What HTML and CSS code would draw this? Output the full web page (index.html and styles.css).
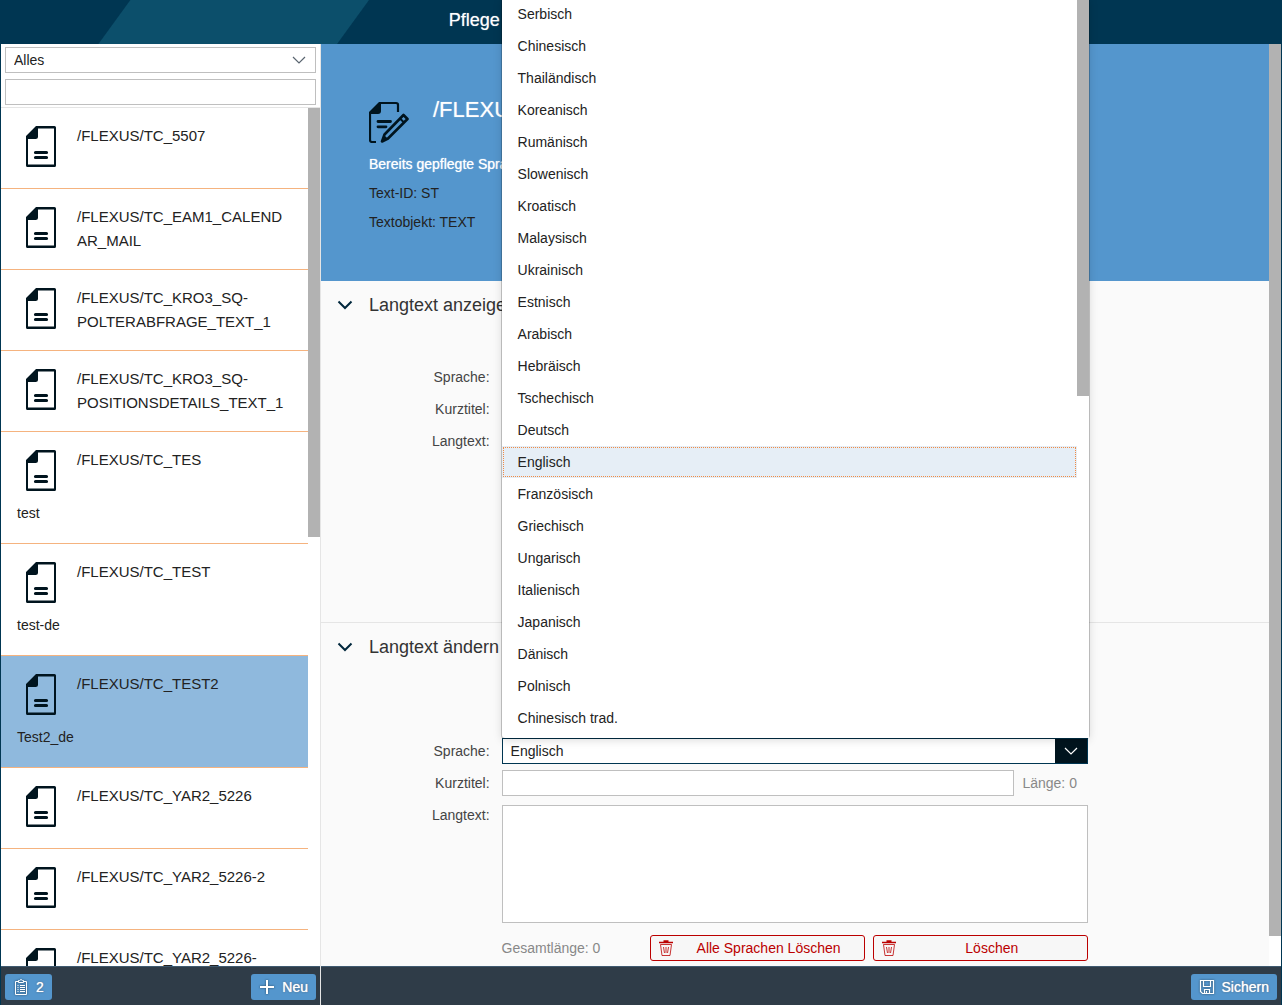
FILE: index.html
```html
<!DOCTYPE html>
<html lang="de">
<head>
<meta charset="utf-8">
<meta name="viewport" content="width=device-width, initial-scale=1">
<title>Pflege</title>
<link rel="stylesheet" href="styles.css">
</head>
<body>
<svg class="sprite" aria-hidden="true">
  <symbol id="doc" viewBox="0 0 32 42">
    <path fill-rule="evenodd" d="M11 1H29.500Q31 1 31 2.500V40.500Q31 42 29.500 42H2.500Q1 42 1 40.500V11ZM13 3.500V11.500Q13 14 10.500 14H3V39.500H29V3.500Z"/>
    <path d="M10.500 27.500H21.500M10.500 32.500H21.500" fill="none" stroke="currentColor" stroke-width="3.200" stroke-linecap="round"/>
  </symbol>
  <symbol id="edit" viewBox="1 0 42 42">
    <path d="M1 11 11 1H13V10Q13 13 10 13H1Z"/>
    <path d="M11 2H28Q30 2 30 3.500V11M2 11V39Q2 41 4 41H8" fill="none" stroke="currentColor" stroke-width="2.200"/>
    <path d="M10 20.500H22.500M10 25.800H18" fill="none" stroke="currentColor" stroke-width="2.800" stroke-linecap="round"/>
    <path d="M35.500 14 39.500 18 20 37.500 14 40.500 16.500 33.500Z" fill="none" stroke="currentColor" stroke-width="2.600" stroke-linejoin="round"/>
    <path d="M32 17.500 36 21.500" stroke="currentColor" stroke-width="2"/>
    <path d="M16 34 20 38 13 41Z"/>
  </symbol>
  <symbol id="chevron" viewBox="0 0 16 16">
    <path d="M2 5 8 11 14 5" fill="none" stroke="currentColor" stroke-width="1.200"/>
  </symbol>
  <symbol id="chevron-bold" viewBox="0 0 16 16">
    <path d="M1.500 4.500 8 11 14.500 4.500" fill="none" stroke="currentColor" stroke-width="2"/>
  </symbol>
  <symbol id="trash" viewBox="0 0 16 16">
    <path d="M1 2.500H15M5.500 1H10.500" fill="none" stroke="currentColor" stroke-width="1.400"/>
    <path d="M2.500 4.500 4 15.500H12L13.500 4.500ZM5.500 7 6.500 13M8 7V13M10.500 7 9.500 13" fill="none" stroke="currentColor" stroke-width=".8"/>
  </symbol>
  <symbol id="clipboard" viewBox="0 0 16 16">
    <path d="M5 2.500H2.500V15.500H13.500V2.500H11M5.500 1.500H6.500L8 .500 9.500 1.500H10.500V3.500H5.500ZM7 6.500H12M7 8.500H12M7 10.500H12M7 12.500H12M4.500 6.500H5.500M4.500 8.500H5.500M4.500 10.500H5.500M4.500 12.500H5.500" fill="none" stroke="currentColor"/>
  </symbol>
  <symbol id="plus" viewBox="0 0 16 16">
    <path d="M8 1V15M1 8H15" fill="none" stroke="currentColor" stroke-width="2"/>
  </symbol>
  <symbol id="save" viewBox="0 0 16 16">
    <path d="M1.500 1.500H14.500V14.500H3.500L1.500 12.500ZM4.500 1.500V7.500H11.500V1.500M5.500 14.500V10.500H10.500V14.500M7.500 12V14.500" fill="none" stroke="currentColor" stroke-width="1.200"/>
  </symbol>
</svg>

<header class="shell-bar"><h1 class="shell-title">Pflege</h1></header>

<div class="app">
  <aside class="master">
    <div class="filters">
      <div class="select">
        <select class="select-input" aria-label="Filter"><option>Alles</option></select>
        <svg class="icon select-arrow"><use href="#chevron"/></svg>
      </div>
      <input class="field" type="search" aria-label="Suche">
    </div>
    <div class="list-area">
      <ul class="list">
        <li class="item"><svg class="doc"><use href="#doc"/></svg><span class="item-title">/FLEXUS/TC_5507</span></li>
        <li class="item"><svg class="doc"><use href="#doc"/></svg><span class="item-title">/FLEXUS/TC_EAM1_CALENDAR_MAIL</span></li>
        <li class="item"><svg class="doc"><use href="#doc"/></svg><span class="item-title">/FLEXUS/TC_KRO3_SQ-POLTERABFRAGE_TEXT_1</span></li>
        <li class="item"><svg class="doc"><use href="#doc"/></svg><span class="item-title">/FLEXUS/TC_KRO3_SQ-POSITIONSDETAILS_TEXT_1</span></li>
        <li class="item"><svg class="doc"><use href="#doc"/></svg><span class="item-title">/FLEXUS/TC_TES</span><span class="item-text">test</span></li>
        <li class="item"><svg class="doc"><use href="#doc"/></svg><span class="item-title">/FLEXUS/TC_TEST</span><span class="item-text">test-de</span></li>
        <li class="item item-selected"><svg class="doc"><use href="#doc"/></svg><span class="item-title">/FLEXUS/TC_TEST2</span><span class="item-text">Test2_de</span></li>
        <li class="item"><svg class="doc"><use href="#doc"/></svg><span class="item-title">/FLEXUS/TC_YAR2_5226</span></li>
        <li class="item"><svg class="doc"><use href="#doc"/></svg><span class="item-title">/FLEXUS/TC_YAR2_5226-2</span></li>
        <li class="item"><svg class="doc"><use href="#doc"/></svg><span class="item-title">/FLEXUS/TC_YAR2_5226-</span></li>
      </ul>
      <div class="scroll"><div class="thumb thumb-list"></div></div>
    </div>
    <footer class="bar">
      <button class="button" type="button"><svg class="icon"><use href="#clipboard"/></svg>2</button>
      <button class="button" type="button"><svg class="icon"><use href="#plus"/></svg>Neu</button>
    </footer>
  </aside>

  <main class="detail">
    <div class="detail-area">
      <div class="page">
        <section class="object">
          <div class="object-head">
            <svg class="object-icon"><use href="#edit"/></svg>
            <h2 class="object-title">/FLEXU</h2>
          </div>
          <p class="object-line object-strong">Bereits gepflegte Spra</p>
          <p class="object-line">Text-ID: ST</p>
          <p class="object-line">Textobjekt: TEXT</p>
        </section>

        <section class="panel panel-view">
          <h3 class="panel-title"><svg class="icon panel-chevron"><use href="#chevron-bold"/></svg>Langtext anzeige</h3>
          <div class="form">
            <span class="label">Sprache:</span>
            <span class="label">Kurztitel:</span>
            <span class="label">Langtext:</span>
          </div>
        </section>

        <section class="panel panel-edit">
          <h3 class="panel-title"><svg class="icon panel-chevron"><use href="#chevron-bold"/></svg>Langtext ändern</h3>
          <form class="form">
            <label class="label" for="language">Sprache:</label>
            <div class="cell">
              <div class="select select-open">
                <select class="select-input" id="language"><option>Englisch</option></select>
                <span class="select-button"><svg class="icon"><use href="#chevron"/></svg></span>
              </div>
              <div class="popover">
                <ul class="options" role="listbox" aria-label="Sprache">
                  <li class="option" role="option">Serbisch</li>
                  <li class="option" role="option">Chinesisch</li>
                  <li class="option" role="option">Thailändisch</li>
                  <li class="option" role="option">Koreanisch</li>
                  <li class="option" role="option">Rumänisch</li>
                  <li class="option" role="option">Slowenisch</li>
                  <li class="option" role="option">Kroatisch</li>
                  <li class="option" role="option">Malaysisch</li>
                  <li class="option" role="option">Ukrainisch</li>
                  <li class="option" role="option">Estnisch</li>
                  <li class="option" role="option">Arabisch</li>
                  <li class="option" role="option">Hebräisch</li>
                  <li class="option" role="option">Tschechisch</li>
                  <li class="option" role="option">Deutsch</li>
                  <li class="option option-selected" role="option" aria-selected="true">Englisch</li>
                  <li class="option" role="option">Französisch</li>
                  <li class="option" role="option">Griechisch</li>
                  <li class="option" role="option">Ungarisch</li>
                  <li class="option" role="option">Italienisch</li>
                  <li class="option" role="option">Japanisch</li>
                  <li class="option" role="option">Dänisch</li>
                  <li class="option" role="option">Polnisch</li>
                  <li class="option" role="option">Chinesisch trad.</li>
                </ul>
                <div class="scroll"><div class="thumb thumb-options"></div></div>
              </div>
            </div>
            <label class="label" for="short">Kurztitel:</label>
            <div class="cell cell-row">
              <input class="field" id="short" type="text">
              <span class="hint hint-side">Länge: 0</span>
            </div>
            <label class="label" for="long">Langtext:</label>
            <textarea class="field area" id="long"></textarea>
            <div class="actions">
              <span class="hint">Gesamtlänge: 0</span>
              <button class="danger" type="button"><svg class="icon"><use href="#trash"/></svg><span class="danger-text">Alle Sprachen Löschen</span></button>
              <button class="danger" type="button"><svg class="icon"><use href="#trash"/></svg><span class="danger-text">Löschen</span></button>
            </div>
          </form>
        </section>
      </div>
      <div class="scroll"><div class="thumb thumb-page"></div></div>
    </div>
    <footer class="bar bar-end">
      <button class="button" type="button"><svg class="icon"><use href="#save"/></svg>Sichern</button>
    </footer>
  </main>
</div>
</body>
</html>
```

FILE: styles.css
```css
* { box-sizing: border-box; }

body {
  margin: 0;
  height: 100vh;
  display: flex;
  flex-direction: column;
  overflow: hidden;
  background: #003652;
  color: #333;
  font: 14px/16px "Liberation Sans", Arial, sans-serif;
}

h1, h2, h3, p, ul { margin: 0; padding: 0; font-weight: normal; }
ul { list-style: none; }
button, input, select, textarea { font: inherit; color: inherit; margin: 0; }
svg { flex: none; fill: currentColor; }

.sprite { display: none; }
.icon { width: 16px; height: 16px; }

/* Shell bar with the slanted band */
.shell-bar {
  flex: none;
  height: 44px;
  display: flex;
  align-items: center;
  padding-left: 35%;
  padding-bottom: 4px;
  background: linear-gradient(126deg, transparent 105px, #0c4f6b 106px, #0c4f6b 298px, transparent 299px) no-repeat 0 0 / 400px 44px;
}
.shell-title { font-size: 18px; line-height: 24px; color: #fff; text-shadow: 0 0 1px rgba(255, 255, 255, .6); }

.app { flex: 1; min-height: 0; display: flex; padding: 0 1px; }

/* Master list */
.master {
  width: 320px;
  flex: none;
  display: flex;
  flex-direction: column;
  background: #fff;
  border-right: 1px solid #e5e5e5;
}
.filters {
  display: flex;
  flex-direction: column;
  gap: 6px;
  padding: 3px 4px 2px;
  border-bottom: 1px solid #e5e5e5;
}
.field {
  width: 100%;
  height: 26px;
  padding: 0 8px;
  border: 1px solid #bfbfbf;
  border-radius: 0;
  background: #fff;
  appearance: none;
  outline: none;
}
.select {
  display: flex;
  align-items: center;
  height: 26px;
  border: 1px solid #bfbfbf;
  background: #fff;
}
.select-input {
  flex: 1;
  min-width: 0;
  height: 24px;
  padding: 0 8px;
  border: 0;
  background: none;
  color: #222;
  appearance: none;
  outline: none;
}
.select-arrow { margin-right: 8px; color: #5a6570; }

.list-area { flex: 1; min-height: 0; display: flex; overflow: hidden; }
.list { flex: 1; min-width: 0; }
.item {
  display: grid;
  grid-template-columns: 60px 1fr;
  padding: 16px;
  border-bottom: 1px solid #f5b37f;
}
.item-selected { background: #8fb9dd; }
.doc { width: 32px; height: 42px; margin: 1px 8px 5px; color: #00141e; }
.item-title { font-size: 15px; line-height: 24px; overflow-wrap: anywhere; }
.item-text { grid-column: 1 / -1; line-height: 17px; margin: 9px 0 5px; }
.item-title, .item-text { color: #222; }

.scroll { width: 12px; flex: none; background: #fff; }
.thumb { background: #b2b2b2; }
.thumb-list { height: 50%; }
.thumb-page { height: calc(100% - 30px); }
.thumb-options { height: 398px; }

/* Footer bars */
.bar {
  flex: none;
  height: 39px;
  display: flex;
  align-items: center;
  justify-content: space-between;
  padding: 2px 4px 0;
  background: #2f3c48;
  border-top: 1px solid #3f5a70;
}
.bar-end { justify-content: flex-end; }
.button {
  height: 26px;
  display: flex;
  align-items: center;
  gap: 7px;
  padding: 0 8px;
  border: 0;
  border-radius: 3px;
  background: #5496cd;
  color: #fff;
  text-shadow: 0 0 1px #fff, 0 0 2px rgba(0, 0, 0, .6);
}
.button .icon { filter: drop-shadow(0 0 1px rgba(0, 0, 0, .5)); }

/* Detail */
.detail { flex: 1; min-width: 0; display: flex; flex-direction: column; background: #fafafa; }
.detail-area { flex: 1; min-height: 0; display: flex; }
.page { flex: 1; min-width: 0; }
.object { height: 237px; padding: 50px 48px 0; background: #5496cd; }
.object-head { display: flex; gap: 22px; margin-bottom: 6px; }
.object-icon { width: 42px; height: 42px; margin: 7px 0 1px; color: #00141e; }
.object-title { font-size: 22px; line-height: 32px; color: #fff; text-shadow: 0 0 1px rgba(255, 255, 255, .6); }
.object-line { line-height: 29px; color: #222; }
.object-strong { color: #fff; text-shadow: 0 0 1px rgba(255, 255, 255, .8); }

.panel-view { height: 342px; border-bottom: 1px solid #e5e5e5; }
.panel-title {
  display: flex;
  align-items: center;
  gap: 16px;
  height: 48px;
  padding-left: 16px;
  font-size: 18px;
  line-height: 24px;
}
.panel-chevron { color: #00273c; }

.form { display: grid; grid-template-columns: 4fr 13fr 4fr; }
.panel-view .form { padding-top: 32px; }
.panel-edit .form { padding-top: 64px; }
.label { grid-column: 1; line-height: 32px; padding-right: 12px; text-align: right; color: #444; }
.cell { position: relative; grid-column: 2; padding: 3px 0; }
.cell-row { display: flex; align-items: center; }
.cell-row .field { flex: 1; }
.area { grid-column: 2; height: 118px; margin-top: 6px; resize: none; display: block; }
.hint { color: #888; }
.hint-side { width: 74px; padding-left: 8px; white-space: nowrap; }

.select-open { border-color: #003652; }
.select-button {
  width: 32px;
  align-self: stretch;
  display: grid;
  place-items: center;
  background: #00141e;
  color: #fff;
}

.actions {
  grid-column: 2;
  display: grid;
  grid-template-columns: 15fr 23fr 23fr;
  align-items: center;
  gap: 8px;
  margin-top: 12px;
}
.danger {
  display: flex;
  align-items: center;
  height: 26px;
  padding: 0 1px 0 7px;
  border: 1px solid #b00;
  border-radius: 3px;
  background: #f7f7f7;
  color: #b00;
}
.danger-text { flex: 1; text-align: center; }

/* Open language list, above its select */
.popover {
  position: absolute;
  z-index: 10;
  left: 0;
  right: -1px;
  bottom: calc(100% - 3px);
  display: flex;
  background: #fff;
  border-radius: 0 0 3px 3px;
  box-shadow: 0 0 0 1px rgba(0, 0, 0, .2), 0 2px 10px rgba(0, 0, 0, .15);
}
.options { flex: 1; padding-bottom: 4px; }
.option { line-height: 32px; padding: 0 16px; color: #222; }
.option-selected { background: #e6eef6; outline: 1px dotted #f08b45; outline-offset: -2px; }
```
